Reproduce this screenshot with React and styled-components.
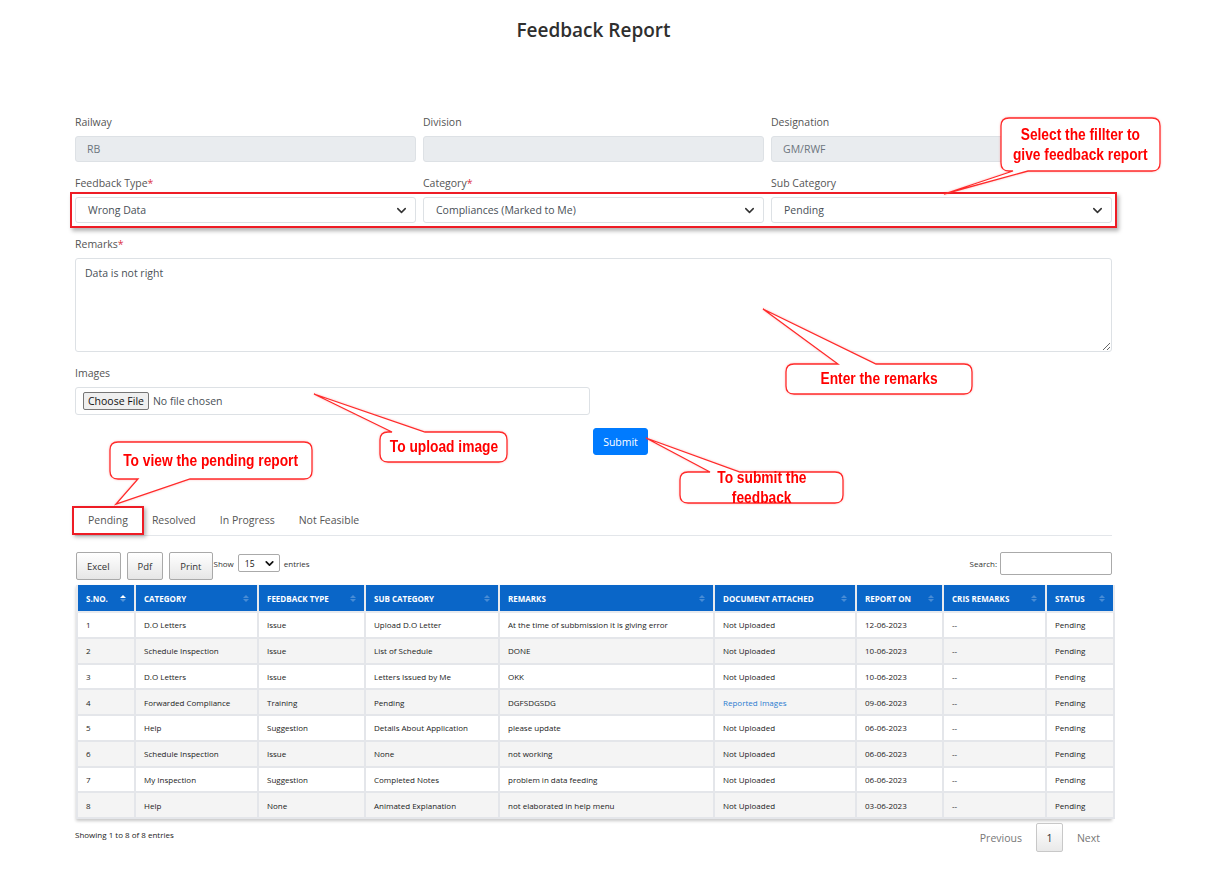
import React from "react";
import styled, { createGlobalStyle } from "styled-components";
import { ChevronDown } from "lucide-react";

const GlobalStyle = createGlobalStyle`
  * { box-sizing: border-box; }
  body {
    margin: 0;
    background: #ffffff;
    font-family: "Open Sans", "Noto Sans", sans-serif;
    color: #333;
  }
`;

const rows = [
  [1, "D.O Letters", "Issue", "Upload D.O Letter", "At the time of subbmission it is giving error", "Not Uploaded", "12-06-2023"],
  [2, "Schedule Inspection", "Issue", "List of Schedule", "DONE", "Not Uploaded", "10-06-2023"],
  [3, "D.O Letters", "Issue", "Letters Issued by Me", "OKK", "Not Uploaded", "10-06-2023"],
  [4, "Forwarded Compliance", "Training", "Pending", "DGFSDGSDG", "Reported Images", "09-06-2023"],
  [5, "Help", "Suggestion", "Details About Application", "please update", "Not Uploaded", "06-06-2023"],
  [6, "Schedule Inspection", "Issue", "None", "not working", "Not Uploaded", "06-06-2023"],
  [7, "My Inspection", "Suggestion", "Completed Notes", "problem in data feeding", "Not Uploaded", "06-06-2023"],
  [8, "Help", "None", "Animated Explanation", "not elaborated in help menu", "Not Uploaded", "03-06-2023"],
];

const columns = [
  ["S.NO.", 58],
  ["CATEGORY", 123],
  ["FEEDBACK TYPE", 107],
  ["SUB CATEGORY", 134],
  ["REMARKS", 215],
  ["DOCUMENT ATTACHED", 142],
  ["REPORT ON", 87],
  ["CRIS REMARKS", 103],
  ["STATUS", 68],
];

// annotation callouts drawn over the page
const callouts = [
  {
    box: { x: 1001, y: 118, w: 159, h: 53 },
    tail: { side: "bottom", b1: 1013, b2: 1028, tx: 944, ty: 194 },
    lines: ["Select the fillter to", "give feedback report"],
  },
  {
    box: { x: 786, y: 364, w: 186, h: 30 },
    tail: { side: "top", b1: 838, b2: 876, tx: 763, ty: 309 },
    lines: ["Enter the remarks"],
  },
  {
    box: { x: 380, y: 432, w: 127, h: 30 },
    tail: { side: "top", b1: 392, b2: 425, tx: 314, ty: 394 },
    lines: ["To upload image"],
  },
  {
    box: { x: 110, y: 442, w: 202, h: 37 },
    tail: { side: "bottom", b1: 138, b2: 190, tx: 116, ty: 504 },
    lines: ["To view the pending report"],
  },
  {
    box: { x: 680, y: 472, w: 163, h: 31 },
    tail: { side: "top", b1: 710, b2: 740, tx: 646, ty: 438 },
    lines: ["To submit the", "feedback"],
  },
];

function calloutPath({ x, y, w, h }, t, r = 8) {
  const R = x + w;
  const B = y + h;
  let d = `M${x + r},${y}`;
  if (t.side === "top") d += ` L${t.b1},${y} L${t.tx},${t.ty} L${t.b2},${y}`;
  d += ` L${R - r},${y} Q${R},${y} ${R},${y + r} L${R},${B - r} Q${R},${B} ${R - r},${B}`;
  if (t.side === "bottom") d += ` L${t.b2},${B} L${t.tx},${t.ty} L${t.b1},${B}`;
  d += ` L${x + r},${B} Q${x},${B} ${x},${B - r} L${x},${y + r} Q${x},${y} ${x + r},${y} Z`;
  return d;
}

export default function App() {
  return (
    <Page>
      <GlobalStyle />
      <Container>
        <Title>Feedback Report</Title>

        <Form>
          <LabelGrid>
            <Label>Railway</Label>
            <Label>Division</Label>
            <Label>Designation</Label>
          </LabelGrid>
          <ControlGrid>
            <ReadOnlyBox>RB</ReadOnlyBox>
            <ReadOnlyBox />
            <ReadOnlyBox>GM/RWF</ReadOnlyBox>
          </ControlGrid>

          <LabelGrid>
            <Label>Feedback Type<Req>*</Req></Label>
            <Label>Category<Req>*</Req></Label>
            <Label>Sub Category</Label>
          </LabelGrid>
          <ControlGrid $highlight>
            <SelectBox><span>Wrong Data</span><ChevronDown size={15} strokeWidth={2.4} /></SelectBox>
            <SelectBox><span>Compliances (Marked to Me)</span><ChevronDown size={15} strokeWidth={2.4} /></SelectBox>
            <SelectBox><span>Pending</span><ChevronDown size={15} strokeWidth={2.4} /></SelectBox>
          </ControlGrid>

          <Label>Remarks<Req>*</Req></Label>
          <Remarks defaultValue="Data is not right" spellCheck={false} />

          <Label>Images</Label>
          <FileBox>
            <input type="file" />
          </FileBox>

          <SubmitRow>
            <SubmitButton>Submit</SubmitButton>
          </SubmitRow>
        </Form>

        <TabBar>
          <Tab $boxed>Pending</Tab>
          <Tab>Resolved</Tab>
          <Tab>In Progress</Tab>
          <Tab>Not Feasible</Tab>
        </TabBar>

        <Toolbar>
          <ToolGroup>
            <ExportButton>Excel</ExportButton>
            <ExportButton>Pdf</ExportButton>
            <ExportButton>Print</ExportButton>
            <LengthControl>
              Show
              <LengthSelect>15 <ChevronDown size={13} strokeWidth={3.2} /></LengthSelect>
              entries
            </LengthControl>
          </ToolGroup>
          <SearchLabel>
            Search:
            <SearchInput />
          </SearchLabel>
        </Toolbar>

        <TableWrap>
          <Table>
            <colgroup>
              {columns.map(([name, w]) => (
                <col key={name} style={{ width: w }} />
              ))}
            </colgroup>
            <thead>
              <tr>
                {columns.map(([name], i) => (
                  <Th key={name}>
                    <HeadInner>
                      {name}
                      <SortIcon $active={i === 0}>
                        <Up />
                        <Down />
                      </SortIcon>
                    </HeadInner>
                  </Th>
                ))}
              </tr>
            </thead>
            <tbody>
              {rows.map(([n, cat, type, sub, remark, doc, date]) => (
                <Row key={n} $striped={n % 2 === 0}>
                  <Td>{n}</Td>
                  <Td>{cat}</Td>
                  <Td>{type}</Td>
                  <Td>{sub}</Td>
                  <Td>{remark}</Td>
                  <Td>{doc === "Reported Images" ? <DocLink>{doc}</DocLink> : doc}</Td>
                  <Td>{date}</Td>
                  <Td>--</Td>
                  <Td>Pending</Td>
                </Row>
              ))}
            </tbody>
          </Table>
        </TableWrap>

        <Footer>
          <Info>Showing 1 to 8 of 8 entries</Info>
          <Pager>
            <PageLink>Previous</PageLink>
            <PageNumber>1</PageNumber>
            <PageLink>Next</PageLink>
          </Pager>
        </Footer>
      </Container>

      <Annotations width="1211" height="870">
        <defs>
          <filter id="glow" x="-10%" y="-10%" width="120%" height="130%">
            <feDropShadow dx="0" dy="0" stdDeviation="1" floodColor="#ff0000" floodOpacity="0.25" />
          </filter>
        </defs>
        {callouts.map((c, i) => (
          <path
            key={i}
            d={calloutPath(c.box, c.tail)}
            fill="#ffffff"
            stroke="#ff2a2a"
            strokeWidth="1.3"
            filter="url(#glow)"
          />
        ))}
      </Annotations>
      {callouts.map((c, i) => (
        <CalloutText
          key={i}
          style={{ left: c.box.x, top: c.box.y, width: c.box.w, height: c.box.h }}
        >
          {c.lines.map((l) => (
            <CalloutLine key={l}>{l}</CalloutLine>
          ))}
        </CalloutText>
      ))}
    </Page>
  );
}

const Page = styled.div`
  position: relative;
  width: 1211px;
  height: 870px;
  overflow: hidden;
`;

const Container = styled.div`
  margin-left: 75px;
  width: 1037px;
  padding-top: 16px;
`;

const Title = styled.h1`
  margin: 0;
  text-align: center;
  font-size: 19px;
  line-height: 28px;
  font-weight: 600;
  color: #2f2f2f;
`;

const Form = styled.div`
  margin-top: 71px;
  display: flex;
  flex-direction: column;
`;

const LabelGrid = styled.div`
  display: grid;
  grid-template-columns: repeat(3, 341px);
  column-gap: 7px;
`;

const ControlGrid = styled.div`
  display: grid;
  grid-template-columns: repeat(3, 341px);
  column-gap: 7px;
  margin-bottom: 14px;
  box-shadow: ${(p) =>
    p.$highlight
      ? "0 0 0 3px #fff, 0 0 0 5px #ee1c25, 2px 3px 4px 5px rgba(0,0,0,0.3)"
      : "none"};
`;

const Label = styled.div`
  font-size: 10.5px;
  line-height: 14px;
  color: #555;
  margin-bottom: 7px;
`;

const Req = styled.span`
  color: #dc3545;
`;

const ReadOnlyBox = styled.div`
  height: 26px;
  background: #e9ecef;
  border: 1px solid #dde1e5;
  border-radius: 3px;
  padding: 0 11px;
  display: flex;
  align-items: center;
  font-size: 10.5px;
  color: #6c757d;
`;

const SelectBox = styled.div`
  height: 26px;
  background: #fff;
  border: 1px solid #dde1e5;
  border-radius: 3px;
  padding: 0 6px 0 12px;
  display: flex;
  align-items: center;
  justify-content: space-between;
  font-size: 10.5px;
  color: #495057;
  svg {
    color: #333;
  }
`;

const Remarks = styled.textarea`
  height: 94px;
  width: 100%;
  margin: 0 0 14px;
  border: 1px solid #dde1e5;
  border-radius: 3px;
  padding: 7px 9px;
  font-family: "Open Sans", "Noto Sans", sans-serif;
  font-size: 10.5px;
  color: #495057;
  resize: vertical;
  outline: none;
`;

const FileBox = styled.div`
  width: 515px;
  height: 28px;
  border: 1px solid #dde1e5;
  border-radius: 3px;
  padding: 0 7px;
  display: flex;
  align-items: center;
  input {
    font-family: "Open Sans", "Noto Sans", sans-serif;
    font-size: 10.5px;
    color: #495057;
  }
  input::file-selector-button {
    font-family: "Open Sans", "Noto Sans", sans-serif;
    font-size: 10.5px;
    color: #111;
    background: #efefef;
    border: 1px solid #767676;
    border-radius: 2px;
    padding: 1px 4px;
    margin-right: 4px;
  }
`;

const SubmitRow = styled.div`
  margin-top: 13px;
  padding-left: 518px;
`;

const SubmitButton = styled.button`
  width: 55px;
  height: 27px;
  background: #007bff;
  border: 1px solid #007bff;
  border-radius: 3px;
  color: #fff;
  font-family: "Open Sans", "Noto Sans", sans-serif;
  font-size: 10.5px;
  padding: 0;
`;

const TabBar = styled.div`
  margin-top: 55px;
  display: flex;
  padding-left: 1px;
  padding-bottom: 4px;
  border-bottom: 1px solid #e3e6ea;
`;

const Tab = styled.div`
  height: 21px;
  line-height: 21px;
  padding: 0 12px;
  font-size: 10.5px;
  color: #555;
  box-shadow: ${(p) =>
    p.$boxed
      ? "0 0 0 2px #fff, 0 0 0 4px #ee1c25, 2px 2px 4px 4px rgba(0,0,0,0.3)"
      : "none"};
`;

const Toolbar = styled.div`
  margin-top: 16px;
  display: flex;
  justify-content: space-between;
  align-items: flex-start;
  padding-left: 1px;
`;

const ToolGroup = styled.div`
  display: flex;
  align-items: flex-start;
  gap: 6px;
`;

const ExportButton = styled.button`
  height: 28px;
  min-width: 36px;
  padding: 0 10px;
  background: linear-gradient(#ffffff, #e6e6e6);
  border: 1px solid #a9a9a9;
  border-radius: 2px;
  font-family: "Open Sans", "Noto Sans", sans-serif;
  font-size: 9.5px;
  color: #333;
`;

const LengthControl = styled.div`
  display: flex;
  align-items: center;
  gap: 4px;
  margin-left: -5px;
  padding-top: 2px;
  font-size: 8px;
  color: #333;
`;

const LengthSelect = styled.div`
  width: 42px;
  height: 18px;
  border: 1px solid #aaa;
  border-radius: 2px;
  display: flex;
  align-items: center;
  justify-content: space-between;
  padding: 0 3px 0 6px;
  font-size: 8.5px;
  color: #111;
`;

const SearchLabel = styled.label`
  display: flex;
  align-items: center;
  gap: 3px;
  font-size: 8px;
  color: #333;
`;

const SearchInput = styled.input`
  width: 112px;
  height: 23px;
  border: 1px solid #aaa;
  border-radius: 2px;
  outline: none;
`;

const TableWrap = styled.div`
  margin-top: 5px;
  margin-left: 1px;
  box-shadow: 0 2px 3px rgba(0, 0, 0, 0.22);
`;

const Table = styled.table`
  width: 1037px;
  table-layout: fixed;
  border-collapse: collapse;
  font-size: 8px;
`;

const Th = styled.th`
  height: 27px;
  background: #0a66c8;
  color: #fff;
  font-weight: 700;
  text-align: left;
  padding: 0 8px;
  border: 2px solid #e8eaee;
  border-top: none;
`;

const HeadInner = styled.div`
  display: flex;
  align-items: center;
  justify-content: space-between;
`;

const SortIcon = styled.span`
  display: flex;
  flex-direction: column;
  gap: 1px;
  opacity: ${(p) => (p.$active ? 1 : 0.25)};
  span:last-child {
    opacity: ${(p) => (p.$active ? 0.3 : 1)};
  }
`;

const Up = styled.span`
  width: 0;
  height: 0;
  border-left: 3px solid transparent;
  border-right: 3px solid transparent;
  border-bottom: 3px solid #fff;
`;

const Down = styled.span`
  width: 0;
  height: 0;
  border-left: 3px solid transparent;
  border-right: 3px solid transparent;
  border-top: 3px solid #fff;
`;

const Row = styled.tr`
  background: ${(p) => (p.$striped ? "#f4f4f4" : "#ffffff")};
`;

const Td = styled.td`
  height: 25.75px;
  padding: 0 8px;
  border: 2px solid #e4e6ea;
  color: #222;
  white-space: nowrap;
  overflow: hidden;
`;

const DocLink = styled.span`
  color: #2a7bd0;
`;

const Footer = styled.div`
  margin-top: 4px;
  display: flex;
  justify-content: space-between;
  align-items: flex-start;
`;

const Info = styled.div`
  padding-top: 6px;
  font-size: 8px;
  color: #222;
`;

const Pager = styled.div`
  display: flex;
  align-items: center;
`;

const PageLink = styled.span`
  padding: 0 14px;
  font-size: 10.5px;
  color: #777;
  &:last-child {
    padding-right: 12px;
  }
`;

const PageNumber = styled.span`
  width: 27px;
  height: 29px;
  display: flex;
  align-items: center;
  justify-content: center;
  border: 1px solid #c8c8c8;
  border-radius: 2px;
  background: linear-gradient(#ffffff, #e9e9e9);
  font-size: 10.5px;
  color: #333;
`;

const Annotations = styled.svg`
  position: absolute;
  left: 0;
  top: 0;
  pointer-events: none;
`;

const CalloutText = styled.div`
  position: absolute;
  display: flex;
  flex-direction: column;
  align-items: center;
  justify-content: center;
  font-family: "Liberation Sans", Arial, sans-serif;
  font-weight: 700;
  font-size: 16px;
  line-height: 20px;
  color: #ff0000;
  white-space: nowrap;
  pointer-events: none;
`;

const CalloutLine = styled.span`
  display: inline-block;
  transform: scaleX(0.86);
`;
